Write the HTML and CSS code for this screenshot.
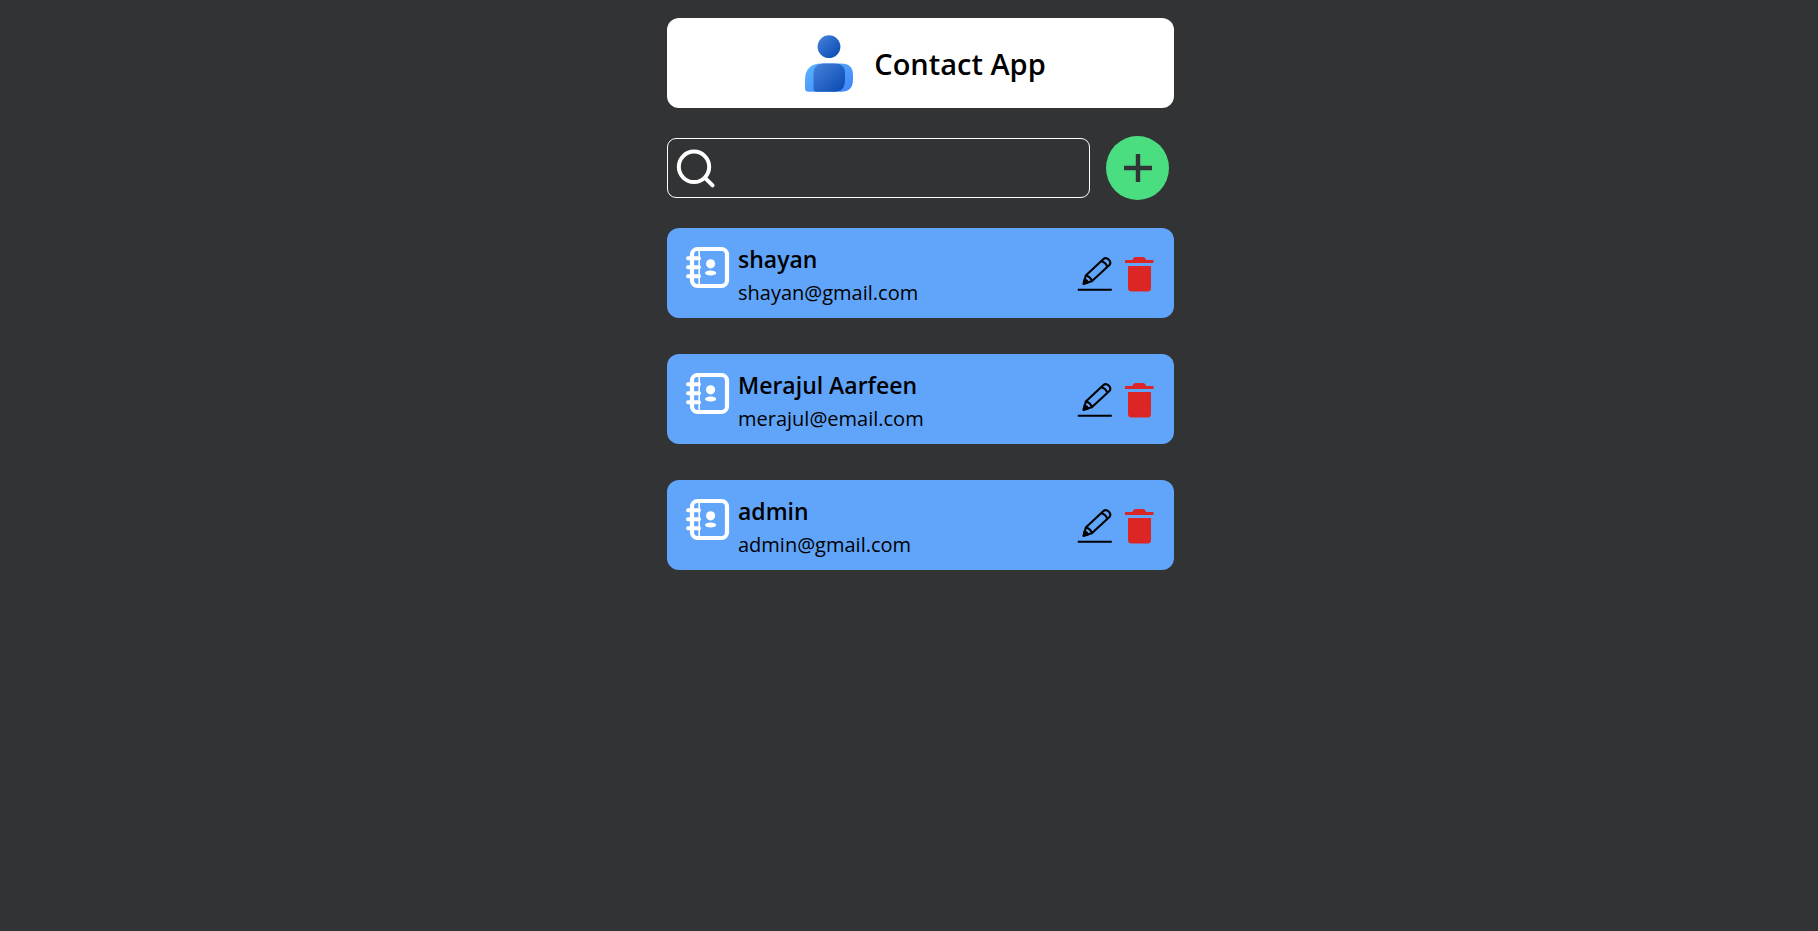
FILE: index.html
```html
<!DOCTYPE html>
<html lang="en">
<head>
<meta charset="utf-8">
<meta name="viewport" content="width=device-width, initial-scale=1">
<title>Contact App</title>
<link rel="stylesheet" href="styles.css">
</head>
<body>
<svg class="sprite" aria-hidden="true">
  <symbol id="book" viewBox="0 0 44 44">
    <rect x="6" y="3" width="35" height="37" rx="5.500" fill="none" stroke="currentColor" stroke-width="4.200"/>
    <path d="M13.200 3v36" stroke="currentColor" stroke-width="1.600"/>
    <path d="M2 12.200h11M2 21.200h11M2 30.200h11" stroke="currentColor" stroke-width="4" stroke-linecap="round"/>
    <circle cx="24.600" cy="17.800" r="4.600" fill="currentColor"/>
    <ellipse cx="24.600" cy="27" rx="5.600" ry="2.400" fill="currentColor"/>
  </symbol>
  <symbol id="pencil" viewBox="0 0 36 36">
    <g fill="none" stroke="currentColor" stroke-width="2.100" stroke-linejoin="round">
      <path d="M6.800 27.500 8.800 19.500 26.200 3.200Q28.800 .9 31.700 3.600 34.600 6.300 32.400 9L14.800 25.200Z"/>
      <path d="M8.800 19.500q4.800 1 6 5.700M24.200 5.200q4.800 1 6 5.600"/>
      <path d="M6.500 28 7.500 23.600q2.800.6 3.600 3Z" fill="currentColor"/>
      <path d="M.8 33.700h34"/>
    </g>
  </symbol>
  <symbol id="trash" viewBox="0 0 30 36">
    <path fill="currentColor" d="M1 4h7.500Q9 1 12 1h6.500Q21.500 1 22 4H29.500V7H1ZM4 10H27V32Q27 35.500 23.500 35.500H7.500Q4 35.500 4 32Z"/>
  </symbol>
</svg>
<main class="app">
  <header class="banner">
    <svg class="logo" viewBox="0 0 48 57" aria-hidden="true">
      <defs>
        <linearGradient id="dark" x1="0" y1="0" x2="1" y2="1"><stop offset="0" stop-color="#4583db"/><stop offset="1" stop-color="#0848b0"/></linearGradient>
        <linearGradient id="light" x1="0" y1="0" x2="1" y2="1"><stop offset="0" stop-color="#5bb5ff"/><stop offset="1" stop-color="#3f83fb"/></linearGradient>
      </defs>
      <circle cx="24" cy="11.700" r="11.400" fill="url(#dark)"/>
      <path d="M17 28.500H36Q48 28.500 48 40V44.500Q48 56.800 36 56.800H3.500Q0 56.800 0 53.200V45Q0 28.500 17 28.500Z" fill="url(#light)"/>
      <path d="M19 28.500H29Q40 28.500 40 38V45Q40 56.800 29 56.800H11.500Q8.500 56.800 8.500 53.500V39Q8.500 28.500 19 28.500Z" fill="url(#dark)"/>
    </svg>
    <h1 class="title">Contact App</h1>
  </header>
  <div class="toolbar">
    <label class="search">
      <svg class="search-icon" viewBox="0 0 40 40" aria-hidden="true"><g fill="none" stroke="currentColor" stroke-width="4" stroke-linecap="round"><circle cx="18" cy="18.800" r="15.200"/><path d="M29 29.800l7.500 7.500"/></g></svg>
      <input class="search-input" type="text" aria-label="Search contacts">
    </label>
    <button class="add" type="button" aria-label="Add contact">
      <svg class="plus" viewBox="0 0 28 28" aria-hidden="true"><path d="M14 2.200v23.600M2.200 14h23.600" stroke="currentColor" stroke-width="4.400" stroke-linecap="square"/></svg>
    </button>
  </div>
  <ul class="contacts">
    <li class="card">
      <svg class="book" aria-hidden="true"><use href="#book"/></svg>
      <div class="info"><h2 class="name">shayan</h2><p class="email">shayan@gmail.com</p></div>
      <button class="action edit" type="button" aria-label="Edit shayan"><svg class="icon" aria-hidden="true"><use href="#pencil"/></svg></button>
      <button class="action delete" type="button" aria-label="Delete shayan"><svg class="icon" aria-hidden="true"><use href="#trash"/></svg></button>
    </li>
    <li class="card">
      <svg class="book" aria-hidden="true"><use href="#book"/></svg>
      <div class="info"><h2 class="name">Merajul Aarfeen</h2><p class="email">merajul@email.com</p></div>
      <button class="action edit" type="button" aria-label="Edit Merajul Aarfeen"><svg class="icon" aria-hidden="true"><use href="#pencil"/></svg></button>
      <button class="action delete" type="button" aria-label="Delete Merajul Aarfeen"><svg class="icon" aria-hidden="true"><use href="#trash"/></svg></button>
    </li>
    <li class="card">
      <svg class="book" aria-hidden="true"><use href="#book"/></svg>
      <div class="info"><h2 class="name">admin</h2><p class="email">admin@gmail.com</p></div>
      <button class="action edit" type="button" aria-label="Edit admin"><svg class="icon" aria-hidden="true"><use href="#pencil"/></svg></button>
      <button class="action delete" type="button" aria-label="Delete admin"><svg class="icon" aria-hidden="true"><use href="#trash"/></svg></button>
    </li>
  </ul>
</main>
</body>
</html>
```

FILE: styles.css
```css
*, *::before, *::after { box-sizing: border-box; }
body {
  margin: 0;
  background: #323334;
  color: #000;
  font-family: "Segoe UI", "Open Sans", "Noto Sans", sans-serif;
}
h1, h2, p, ul { margin: 0; padding: 0; }
svg { display: block; flex: none; }
button { border: 0; padding: 0; background: none; cursor: pointer; }
.sprite { position: absolute; width: 0; height: 0; }
.app {
  max-width: 530px;
  margin: 0 auto;
  padding: 18px 0 18px 23px;
}
.banner {
  display: flex;
  align-items: center;
  justify-content: center;
  gap: 21px;
  min-height: 90px;
  padding-left: 10px;
  border-radius: 12px;
  background: #fff;
}
.logo { width: 48px; height: 57px; }
.title { padding-top: 2px; font-size: 29px; line-height: 36px; font-weight: 600; }
.toolbar {
  display: flex;
  align-items: center;
  gap: 16px;
  margin: 28px 0;
  padding-right: 5px;
}
.search {
  flex: 1;
  display: flex;
  align-items: center;
  gap: 8px;
  height: 60px;
  padding: 0 8px;
  border: 1px solid #fff;
  border-radius: 9px;
  color: #fff;
}
.search-icon { width: 40px; height: 40px; }
.search-input {
  flex: 1;
  min-width: 0;
  height: 44px;
  border: 0;
  outline: 0;
  background: transparent;
  color: #fff;
  font: inherit;
  font-size: 22px;
}
.add {
  display: grid;
  place-items: center;
  width: 63px;
  height: 64px;
  border-radius: 50%;
  background: #4ade80;
  color: #323334;
}
.plus { width: 28px; height: 28px; }
.contacts { display: grid; gap: 36px; list-style: none; }
.card {
  display: flex;
  align-items: center;
  min-height: 90px;
  padding: 0 20px 0 19px;
  border-radius: 12px;
  background: #60a5fa;
}
.book { align-self: flex-start; width: 44px; height: 44px; margin: 18px 8px 0 0; color: #fff; }
.info { flex: 1; min-width: 0; padding-top: 6px; }
.name { font-size: 23px; line-height: 33px; font-weight: 600; }
.email { font-size: 20px; line-height: 33px; }
.action { margin-left: 11px; padding-top: 1px; }
.icon { width: 36px; height: 36px; }
.edit { color: #000; }
.delete { color: #dc2626; }
.delete .icon { width: 30px; }
```
